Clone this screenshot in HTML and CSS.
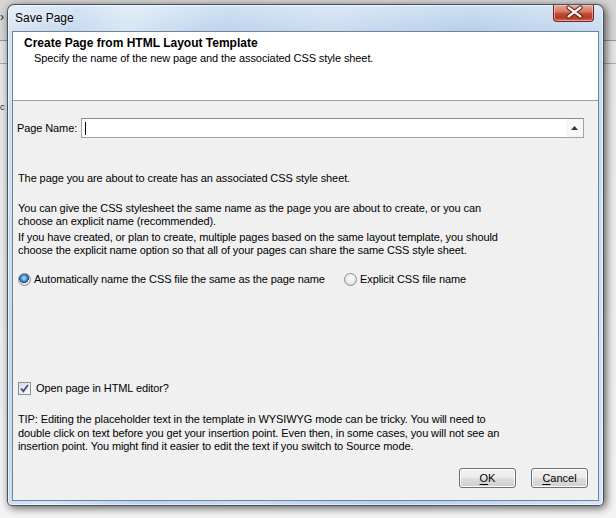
FILE: index.html
```html
<!DOCTYPE html>
<html>
<head>
<meta charset="utf-8">
<link rel="stylesheet" href="styles.css">
</head>
<body>
<div class="desk">
  <span class="bg-glyph g1">›</span>
  <span class="bg-glyph g2">c</span>
  <div class="window">
    <div class="titlebar">
      <span class="title">Save Page</span>
      <div class="close">
        <svg width="41" height="17" viewBox="0 0 41 17">
          <path d="M15.5 3.5 L27.5 12.5 M27.5 3.5 L15.5 12.5" stroke="#5b1d12" stroke-width="4.2" stroke-linecap="round" fill="none"/>
          <path d="M15.5 3.5 L27.5 12.5 M27.5 3.5 L15.5 12.5" stroke="#fbf3ee" stroke-width="2.2" stroke-linecap="round" fill="none"/>
        </svg>
      </div>
    </div>
    <div class="client">
      <div class="header">
        <div class="h-title">Create Page from HTML Layout Template</div>
        <div class="h-sub">Specify the name of the new page and the associated CSS style sheet.</div>
      </div>
      <div class="content">
        <div class="name-row">
          <span class="name-label">Page Name:</span>
          <div class="input">
            <span class="caret"></span>
            <span class="spin"><svg width="7" height="4" viewBox="0 0 7 4"><path d="M0 4 L3.5 0 L7 4 Z" fill="#333"/></svg></span>
          </div>
        </div>
        <p class="p1">The page you are about to create has an associated CSS style sheet.</p>
        <p class="p2">You can give the CSS stylesheet the same name as the page you are about to create, or you can<br>choose an explicit name (recommended).</p>
        <p class="p3">If you have created, or plan to create, multiple pages based on the same layout template, you should<br>choose the explicit name option so that all of your pages can share the same CSS style sheet.</p>
        <div class="radios">
          <span class="radio-item first"><span class="radio on"></span>Automatically name the CSS file the same as the page name</span>
          <span class="radio-item"><span class="radio"></span>Explicit CSS file name</span>
        </div>
        <div class="check-row"><span class="check"><svg width="11" height="11" viewBox="0 0 11 11"><path d="M2 5.5 L4.3 8.2 L9 2" stroke="#3a4f8f" stroke-width="1.8" fill="none"/></svg></span>Open page in HTML editor?</div>
        <p class="tip">TIP: Editing the placeholder text in the template in WYSIWYG mode can be tricky. You will need to<br>double click on text before you get your insertion point. Even then, in some cases, you will not see an<br>insertion point. You might find it easier to edit the text if you switch to Source mode.</p>
        <div class="buttons">
          <button class="btn"><u>O</u>K</button>
          <button class="btn"><u>C</u>ancel</button>
        </div>
      </div>
    </div>
  </div>
</div>
</body>
</html>
```
FILE: styles.css
```css
html, body {
  margin: 0;
  padding: 0;
}
body {
  width: 616px;
  height: 518px;
  overflow: hidden;
  background: #d6d6d6;
  font-family: "Liberation Sans", Arial, sans-serif;
  font-size: 11px;
  letter-spacing: -0.1px;
  color: #000;
}
.desk {
  position: relative;
  width: 616px;
  height: 518px;
  overflow: hidden;
  background:
    linear-gradient(#d6d6d6, #d6d6d6) 0 0 / 616px 40px no-repeat,
    linear-gradient(#9a9a9a, #9a9a9a) 0 40px / 616px 1px no-repeat,
    linear-gradient(#e4e4e4, #e4e4e4) 0 41px / 616px 22px no-repeat,
    linear-gradient(#a8a8a8, #a8a8a8) 0 63px / 616px 1px no-repeat,
    linear-gradient(#e6e6e6, #f4f4f4);
  padding-top: 4px;
  box-sizing: border-box;
}
.bg-glyph {
  position: absolute;
  left: 0;
  font-size: 12px;
  color: #222;
}
.g1 { top: 10px; }
.g2 { top: 102px; left: 0; font-size: 9px; }
.window {
  position: relative;
  margin-left: 7px;
  width: 597px;
  height: 502px;
  box-sizing: border-box;
  border: 1px solid rgba(35, 45, 60, 0.8);
  border-radius: 7px 7px 5px 5px;
  background:
    linear-gradient(rgba(255,255,255,0.35), rgba(255,255,255,0) 26px),
    linear-gradient(100deg, #d9e6f3 0%, #c3d8ee 10%, #d6e6f5 18%, #bcd3ec 32%, #cadcf0 48%, #b6cfea 68%, #c5d9ef 84%, #d6e6f5 100%);
  box-shadow: 2px 2px 9px rgba(0,0,0,0.65), inset 0 0 0 1px rgba(255,255,255,0.55);
  display: flex;
  flex-direction: column;
}
.titlebar {
  height: 26px;
  flex: none;
  display: flex;
  align-items: flex-start;
  padding-left: 7px;
}
.title {
  font-size: 12px;
  letter-spacing: 0;
  line-height: 14px;
  margin-top: 6px;
  color: #000;
  text-shadow: 0 0 6px rgba(255,255,255,0.9);
}
.close {
  margin-left: auto;
  margin-right: 9px;
  width: 41px;
  height: 17px;
  box-sizing: border-box;
  border: 1px solid #6b2a22;
  border-top: none;
  border-radius: 0 0 4px 4px;
  background: linear-gradient(#e8a99c 0%, #d87a68 40%, #c24a34 55%, #b73a25 80%, #d26a4e 100%);
  box-shadow: inset 0 0 0 1px rgba(255,220,210,0.5);
  overflow: hidden;
}
.close svg {
  display: block;
  margin: -1px 0 0 -1px;
}
.client {
  margin: 0 4px 3px 4px;
  height: 470px;
  flex: none;
  box-sizing: border-box;
  border: 1px solid #71839b;
  background: #f0f0f0;
  display: flex;
  flex-direction: column;
}
.header {
  height: 64px;
  flex: none;
  background: #fff;
  border-bottom: 1px solid #a0a0a0;
  padding: 4px 0 0 11px;
  box-sizing: content-box;
}
.h-title {
  font-weight: bold;
  font-size: 12px;
  letter-spacing: 0;
  line-height: 15px;
}
.h-sub {
  margin-left: 10px;
  line-height: 15px;
}
.content {
  padding: 0 10px 0 5px;
  display: flex;
  flex-direction: column;
}
.content p {
  margin: 0;
  line-height: 13px;
}
.name-row {
  margin-top: 17px;
  display: flex;
  align-items: center;
  height: 20px;
}
.name-label {
  width: 64px;
  margin-left: -1px;
  flex: none;
}
.input {
  width: 503px;
  height: 20px;
  box-sizing: border-box;
  border: 1px solid #a3a3a3;
  border-top-color: #8e8e8e;
  background: #fff;
  display: flex;
  align-items: center;
  padding-left: 3px;
}
.caret {
  width: 1px;
  height: 13px;
  background: #000;
}
.spin {
  margin-left: auto;
  width: 17px;
  height: 18px;
  background: #f7f7f7;
  display: flex;
  align-items: center;
  justify-content: center;
}
.spin svg { display: block; }
.p1 { margin-top: 34px !important; }
.p2 { margin-top: 17px !important; }
.p3 { margin-top: 3px !important; }
.radios {
  margin-top: 16px;
  height: 13px;
  display: flex;
  align-items: center;
}
.radio-item {
  display: flex;
  align-items: center;
  line-height: 13px;
}
.radio-item.first {
  width: 326px;
}
.radio {
  width: 13px;
  height: 13px;
  box-sizing: border-box;
  border-radius: 50%;
  border: 1px solid #8d8d8d;
  background: radial-gradient(circle at 50% 40%, #ffffff 0%, #e6e6e6 60%, #cfcfcf 100%);
  margin-right: 3px;
  flex: none;
}
.radio.on {
  background:
    radial-gradient(circle at 45% 38%, #bfe3ff 0%, #4f97d6 30%, #184a86 52%, rgba(0,0,0,0) 56%),
    radial-gradient(circle at 50% 40%, #ffffff 0%, #e6e6e6 60%, #cfcfcf 100%);
}
.check-row {
  margin-top: 96px;
  display: flex;
  align-items: center;
  line-height: 13px;
  height: 13px;
}
.check {
  width: 13px;
  height: 13px;
  box-sizing: border-box;
  border: 1px solid #8f8f8f;
  background: linear-gradient(135deg, #dcdcdc, #fbfbfb);
  margin-right: 5px;
  display: flex;
  align-items: center;
  justify-content: center;
  flex: none;
}
.check svg { display: block; }
.tip {
  margin-top: 18px !important;
  line-height: 13.5px !important;
}
.buttons {
  margin-top: 14px;
  display: flex;
  justify-content: flex-end;
  gap: 15px;
}
.btn {
  width: 57px;
  height: 20px;
  box-sizing: border-box;
  padding: 0;
  border: 1px solid #707070;
  border-radius: 3px;
  background: linear-gradient(#f2f2f2 0%, #ebebeb 50%, #dddddd 51%, #cfcfcf 100%);
  box-shadow: inset 0 0 0 1px #fbfbfb;
  font-family: "Liberation Sans", Arial, sans-serif;
  font-size: 11px;
  letter-spacing: 0;
  color: #000;
}
.btn u {
  text-underline-offset: 2px;
}
```
